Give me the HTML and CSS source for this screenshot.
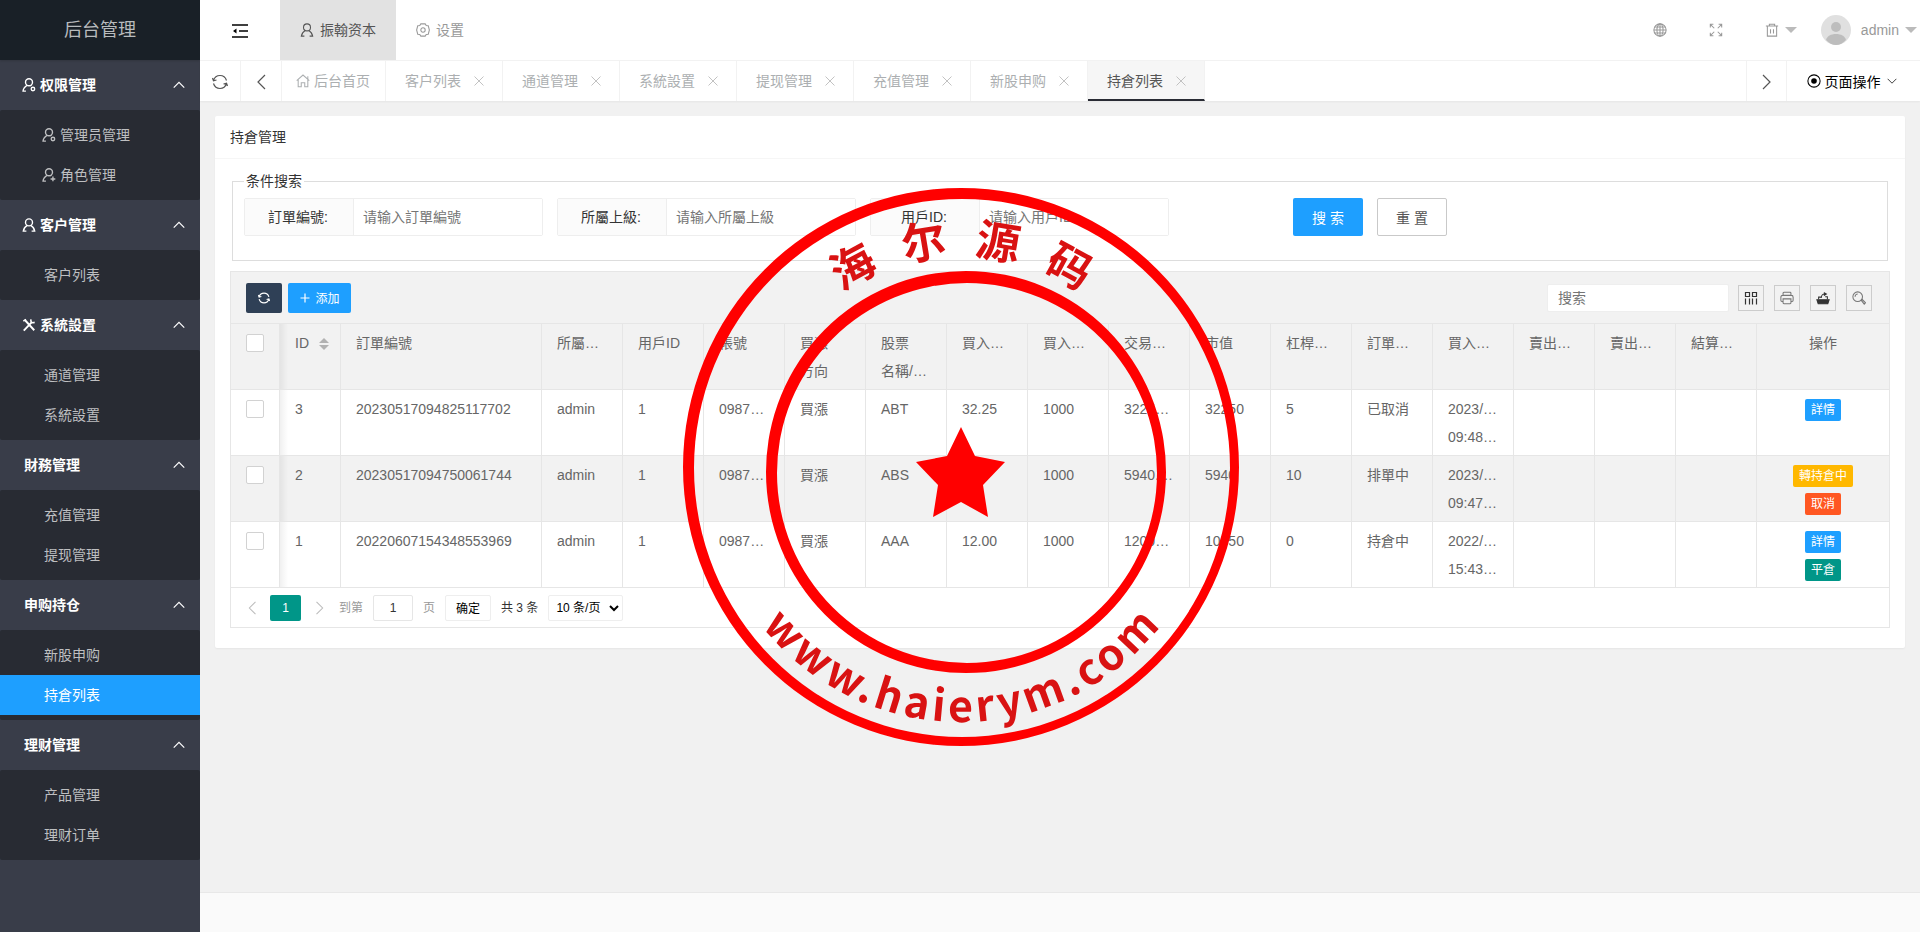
FILE: index.html
```html
<!DOCTYPE html>
<html lang="zh-CN">
<head>
    <meta charset="UTF-8">
    <meta name="viewport" content="width=device-width, initial-scale=1.0">
    <title>后台管理</title>
    <link rel="stylesheet" href="styles.css">
</head>
<body>
    <!-- icon set -->
    <svg class="sprite" aria-hidden="true">
        <symbol id="i-user" viewBox="0 0 16 16"><circle cx="8" cy="5" r="4"/><path d="M6 8.500C3.500 10 2 12 1.500 15H5M10 8.500c2.500 1.500 4 3.500 4.500 6.500H11"/></symbol>
        <symbol id="i-user-set" viewBox="0 0 16 16"><circle cx="8" cy="4.800" r="4"/><path d="M6 8.300C3.500 9.800 1.500 12 1.200 15h3.300M9.800 8.300l.8.700"/><circle cx="12.500" cy="12.500" r="2"/></symbol>
        <symbol id="i-user-add" viewBox="0 0 16 16"><circle cx="8" cy="4.800" r="4"/><path d="M6 8.300C3.500 9.800 1.500 12 1.200 15h3.300M9.800 8.300l.8.700M12.500 9.800v5.400M9.800 12.500h5.400"/></symbol>
        <symbol id="i-tools" viewBox="0 0 16 16"><path d="M2 14.500 11 5M3 2l11 12" stroke-width="2.200"/><path d="M10.500 1.500c-1 2 0 4 2 4l2-.5M1.500 3.500l3-2" stroke-width="1.800"/></symbol>
        <symbol id="i-up" viewBox="0 0 16 16"><path d="M1 11.500 8 4.500l7 7"/></symbol>
        <symbol id="i-down" viewBox="0 0 16 16"><path d="M1 4.500l7 7 7-7"/></symbol>
        <symbol id="i-left" viewBox="0 0 16 16"><path d="M12 1 5 8l7 7"/></symbol>
        <symbol id="i-right" viewBox="0 0 16 16"><path d="M4 1l7 7-7 7"/></symbol>
        <symbol id="i-close" viewBox="0 0 16 16"><path d="M2 2l12 12M14 2 2 14"/></symbol>
        <symbol id="i-plus" viewBox="0 0 16 16"><path d="M8 2v12M2 8h12"/></symbol>
        <symbol id="i-refresh" viewBox="0 0 16 16"><path d="M1.500 6.500C2.500 3.300 5 1.500 8 1.500c3 0 5.500 1.800 6.500 5M14.500 9.500c-1 3.200-3.500 5-6.500 5-3 0-5.500-1.800-6.500-5M.5 4l1 2.800 3-.8M15.500 12l-1-2.800-3 .8"/></symbol>
        <symbol id="i-fold" viewBox="0 0 16 14"><path d="M0 1h16M7 7h9M0 13h16" stroke-width="1.600"/><path d="M4.500 4.500v5L1 7z" fill="currentColor" stroke="none"/></symbol>
        <symbol id="i-gear" viewBox="0 0 16 16"><path d="M5.500 1h5l1.200 1.800 2.300.4L15.300 8 14 12.800l-2.300.4L10.500 15h-5l-1.200-1.800-2.300-.4L.7 8 2 3.200l2.300-.4z"/><circle cx="8" cy="8" r="2.500"/></symbol>
        <symbol id="i-home" viewBox="0 0 16 16"><path d="M.8 7.500 8 1.200l7.200 6.300M2.500 6.500v8h3.500v-4.500h4v4.500h3.500v-12"/></symbol>
        <symbol id="i-globe" viewBox="0 0 16 16"><circle cx="8" cy="8" r="7"/><ellipse cx="8" cy="8" rx="3.500" ry="7"/><path d="M8 1v14M1 8h14M2 4.500h12M2 11.500h12"/></symbol>
        <symbol id="i-full" viewBox="0 0 16 16"><path d="M1.500 5v-3.500H5M1.500 1.500l4.500 4.500M11 1.500h3.500V5M14.500 1.500 10 6M1.500 11v3.500H5M1.500 14.500 6 10M14.500 11v3.500H11M14.500 14.500 10 10"/></symbol>
        <symbol id="i-trash" viewBox="0 0 16 16"><path d="M1 3.500h14M5 3.500v-2h6v2M2.700 3.500v11.500h10.600V3.500M6.300 7v5M9.700 7v5"/></symbol>
        <symbol id="i-caret" viewBox="0 0 12 6"><path d="M0 0h12L6 6z" fill="currentColor" stroke="none"/></symbol>
        <symbol id="i-radio" viewBox="0 0 16 16"><circle cx="8" cy="8" r="7"/><circle cx="8" cy="8" r="3.200" fill="currentColor" stroke="none"/></symbol>
        <symbol id="i-cols" viewBox="0 0 14 14"><path d="M1.500 1.500h4v4h-4zM8.500 1.500h4v4h-4zM1.500 7.500v6M5.500 7.500v6M8.500 7.500v6M12.500 7.500v6"/></symbol>
        <symbol id="i-print" viewBox="0 0 16 16"><path d="M3.500 5V2.500c0-.7.3-1 1-1h7c.7 0 1 .3 1 1V5M3.500 12H2.200C1.300 12 1 11.500 1 10.700V7c0-1.300.7-2 2-2h10c1.300 0 2 .7 2 2v3.700c0 .8-.3 1.300-1.200 1.300h-1.300M3.500 9h9v4.500c0 .7-.3 1-1 1h-7c-.7 0-1-.3-1-1z"/></symbol>
        <symbol id="i-export" viewBox="0 0 16 16"><path d="M1 10h14l-1.500 4.500h-11z" fill="currentColor"/><path d="M3 9.500V7h2.500M10.500 6.500H13v3M6 8c0-3 1.500-4.500 4-4.500"/><path d="M9 1l4 2.500L9 6z" fill="currentColor" stroke="none"/></symbol>
        <symbol id="i-search" viewBox="0 0 16 16"><circle cx="6.500" cy="6.500" r="5.500"/><path d="M3.500 6.500c0-1.700 1.300-3 3-3M10.500 10.500l1-1 4 4-1.500 1.500z"/></symbol>
    </svg>

    <div class="admin">
        <aside class="side">
            <div class="logo">后台管理</div>
            <nav class="menu">
                <h3><svg class="icon"><use href="#i-user-set"/></svg>权限管理<svg class="icon arrow"><use href="#i-up"/></svg></h3>
                <div class="sub">
                    <a href="#"><svg class="icon"><use href="#i-user-set"/></svg>管理员管理</a>
                    <a href="#"><svg class="icon"><use href="#i-user-add"/></svg>角色管理</a>
                </div>
                <h3><svg class="icon"><use href="#i-user"/></svg>客户管理<svg class="icon arrow"><use href="#i-up"/></svg></h3>
                <div class="sub">
                    <a href="#">客户列表</a>
                </div>
                <h3><svg class="icon"><use href="#i-tools"/></svg>系統設置<svg class="icon arrow"><use href="#i-up"/></svg></h3>
                <div class="sub">
                    <a href="#">通道管理</a>
                    <a href="#">系統設置</a>
                </div>
                <h3>財務管理<svg class="icon arrow"><use href="#i-up"/></svg></h3>
                <div class="sub">
                    <a href="#">充值管理</a>
                    <a href="#">提现管理</a>
                </div>
                <h3>申购持仓<svg class="icon arrow"><use href="#i-up"/></svg></h3>
                <div class="sub">
                    <a href="#">新股申购</a>
                    <a href="#" class="active">持倉列表</a>
                </div>
                <h3>理财管理<svg class="icon arrow"><use href="#i-up"/></svg></h3>
                <div class="sub">
                    <a href="#">产品管理</a>
                    <a href="#">理财订单</a>
                </div>
            </nav>
        </aside>

        <div class="main">
            <header class="header">
                <button class="fold" aria-label="侧边伸缩"><svg class="icon"><use href="#i-fold"/></svg></button>
                <a href="#" class="top-link active"><svg class="icon"><use href="#i-user"/></svg>振翰资本</a>
                <a href="#" class="top-link"><svg class="icon"><use href="#i-gear"/></svg>设置</a>
                <div class="header-right">
                    <a href="#" aria-label="语言"><svg class="icon"><use href="#i-globe"/></svg></a>
                    <a href="#" aria-label="全屏"><svg class="icon"><use href="#i-full"/></svg></a>
                    <a href="#" aria-label="清除缓存"><svg class="icon"><use href="#i-trash"/></svg><svg class="caret"><use href="#i-caret"/></svg></a>
                    <a href="#" class="account">
                        <svg class="avatar" viewBox="0 0 30 30">
                            <circle cx="15" cy="15" r="15" fill="#e0e0e0"/>
                            <circle cx="15" cy="12" r="5" fill="#bdbdbd"/>
                            <path d="M5 25c1-4 5-6 10-6s9 2 10 6c-3 3-6 5-10 5s-7-2-10-5z" fill="#bdbdbd"/>
                        </svg>
                        <span>admin</span>
                        <svg class="caret"><use href="#i-caret"/></svg>
                    </a>
                </div>
            </header>

            <div class="tabs">
                <button class="tab-ctl" aria-label="刷新"><svg class="icon"><use href="#i-refresh"/></svg></button>
                <button class="tab-ctl" aria-label="向左"><svg class="icon"><use href="#i-left"/></svg></button>
                <a href="#" class="tab home"><svg class="icon"><use href="#i-home"/></svg>后台首页</a>
                <a href="#" class="tab">客户列表<svg class="icon close"><use href="#i-close"/></svg></a>
                <a href="#" class="tab">通道管理<svg class="icon close"><use href="#i-close"/></svg></a>
                <a href="#" class="tab">系統設置<svg class="icon close"><use href="#i-close"/></svg></a>
                <a href="#" class="tab">提现管理<svg class="icon close"><use href="#i-close"/></svg></a>
                <a href="#" class="tab">充值管理<svg class="icon close"><use href="#i-close"/></svg></a>
                <a href="#" class="tab">新股申购<svg class="icon close"><use href="#i-close"/></svg></a>
                <a href="#" class="tab active">持倉列表<svg class="icon close"><use href="#i-close"/></svg></a>
                <button class="tab-ctl next" aria-label="向右"><svg class="icon"><use href="#i-right"/></svg></button>
                <button class="tab-menu"><svg class="icon"><use href="#i-radio"/></svg>页面操作<svg class="icon down"><use href="#i-down"/></svg></button>
            </div>

            <main class="content">
                <section class="card">
                    <div class="card-header">持倉管理</div>
                    <div class="card-body">
                        <fieldset class="search-box">
                            <legend>条件搜索</legend>
                            <form class="search-form">
                                <div class="field">
                                    <label for="order-no">訂單編號:</label>
                                    <input type="text" id="order-no" placeholder="请输入訂單編號">
                                </div>
                                <div class="field">
                                    <label for="parent">所屬上級:</label>
                                    <input type="text" id="parent" placeholder="请输入所屬上級">
                                </div>
                                <div class="field">
                                    <label for="user-id">用戶ID:</label>
                                    <input type="text" id="user-id" placeholder="请输入用戶ID">
                                </div>
                                <div class="form-buttons">
                                    <button type="button" class="btn btn-blue">搜 索</button>
                                    <button type="reset" class="btn btn-plain">重 置</button>
                                </div>
                            </form>
                        </fieldset>

                        <div class="table-view">
                            <div class="toolbar">
                                <button class="btn-sm dark" aria-label="刷新表格"><svg class="icon"><use href="#i-refresh"/></svg></button>
                                <button class="btn-sm blue"><svg class="icon"><use href="#i-plus"/></svg>添加</button>
                                <input type="text" class="table-search" placeholder="搜索" aria-label="搜索">
                                <button class="tool" aria-label="筛选列"><svg class="icon"><use href="#i-cols"/></svg></button>
                                <button class="tool" aria-label="打印"><svg class="icon light"><use href="#i-print"/></svg></button>
                                <button class="tool" aria-label="导出"><svg class="icon"><use href="#i-export"/></svg></button>
                                <button class="tool" aria-label="查找"><svg class="icon light"><use href="#i-search"/></svg></button>
                            </div>

                            <table>
                                <colgroup>
                                    <col class="c-check"><col class="c-id"><col class="c-order">
                                    <col class="c-std" span="15">
                                    <col>
                                </colgroup>
                                <thead>
                                    <tr>
                                        <th><input type="checkbox" aria-label="全选"></th>
                                        <th>ID<span class="sort"></span></th>
                                        <th>訂單編號</th>
                                        <th>所屬…</th>
                                        <th>用戶ID</th>
                                        <th>帳號</th>
                                        <th>買漲<br>方向</th>
                                        <th>股票<br>名稱/…</th>
                                        <th>買入…</th>
                                        <th>買入…</th>
                                        <th>交易…</th>
                                        <th>市值</th>
                                        <th>杠桿…</th>
                                        <th>訂單…</th>
                                        <th>買入…</th>
                                        <th>賣出…</th>
                                        <th>賣出…</th>
                                        <th>結算…</th>
                                        <th>操作</th>
                                    </tr>
                                </thead>
                                <tbody>
                                    <tr>
                                        <td><input type="checkbox" aria-label="选择 3"></td>
                                        <td>3</td>
                                        <td>20230517094825117702</td>
                                        <td>admin</td>
                                        <td>1</td>
                                        <td>0987…</td>
                                        <td>買漲</td>
                                        <td>ABT</td>
                                        <td>32.25</td>
                                        <td>1000</td>
                                        <td>3225…</td>
                                        <td>32250</td>
                                        <td>5</td>
                                        <td>已取消</td>
                                        <td>2023/…<br>09:48…</td>
                                        <td></td>
                                        <td></td>
                                        <td></td>
                                        <td><button class="btn-xs blue">詳情</button></td>
                                    </tr>
                                    <tr>
                                        <td><input type="checkbox" aria-label="选择 2"></td>
                                        <td>2</td>
                                        <td>20230517094750061744</td>
                                        <td>admin</td>
                                        <td>1</td>
                                        <td>0987…</td>
                                        <td>買漲</td>
                                        <td>ABS</td>
                                        <td>5.94</td>
                                        <td>1000</td>
                                        <td>5940.…</td>
                                        <td>5940</td>
                                        <td>10</td>
                                        <td>排單中</td>
                                        <td>2023/…<br>09:47…</td>
                                        <td></td>
                                        <td></td>
                                        <td></td>
                                        <td><button class="btn-xs yellow">轉持倉中</button><br><button class="btn-xs red">取消</button></td>
                                    </tr>
                                    <tr>
                                        <td><input type="checkbox" aria-label="选择 1"></td>
                                        <td>1</td>
                                        <td>20220607154348553969</td>
                                        <td>admin</td>
                                        <td>1</td>
                                        <td>0987…</td>
                                        <td>買漲</td>
                                        <td>AAA</td>
                                        <td>12.00</td>
                                        <td>1000</td>
                                        <td>1200…</td>
                                        <td>10350</td>
                                        <td>0</td>
                                        <td>持倉中</td>
                                        <td>2022/…<br>15:43…</td>
                                        <td></td>
                                        <td></td>
                                        <td></td>
                                        <td><button class="btn-xs blue">詳情</button><br><button class="btn-xs green">平倉</button></td>
                                    </tr>
                                </tbody>
                            </table>

                            <div class="pager">
                                <button class="page-arrow" aria-label="上一页"><svg class="icon"><use href="#i-left"/></svg></button>
                                <button class="page-now">1</button>
                                <button class="page-arrow" aria-label="下一页"><svg class="icon"><use href="#i-right"/></svg></button>
                                <label class="page-skip">到第<input type="text" value="1">页</label>
                                <button class="page-ok">确定</button>
                                <span>共 3 条</span>
                                <select aria-label="每页条数"><option>10 条/页</option></select>
                            </div>
                        </div>
                    </div>
                </section>
            </main>

            <footer class="footer"></footer>
        </div>
    </div>

    <!-- round seal over the page -->
    <svg class="stamp" viewBox="-281 -281 560 560">
        <g fill="#f00" fill-rule="evenodd">
            <path d="M-278 0a278 279 0 1 0 556 0a278 279 0 1 0-556 0zM-267 1a268 269 0 1 0 536 0a268 269 0 1 0-536 0z"/>
            <path d="M-195 5a200 201 0 1 0 400 0a200 201 0 1 0-400 0zM-184 6a190 190 0 1 0 380 0a190 190 0 1 0-380 0z"/>
            <path d="M0-40 14-11 44-5 22 18 27 50 0 35-28 50-23 18-45-5-14-11z"/>
        </g>
        <path id="arc-top" d="M-212 0A212 212 0 0 1 212 0" fill="none"/>
        <path id="arc-bottom" d="M-255 0A255 255 0 0 0 255 0" fill="none"/>
        <text class="stamp-name" dx="0 26 26 26"><textPath href="#arc-top" startOffset="50%">海尔源码</textPath></text>
        <text class="stamp-site" dx="0 4 4 4 4 4 4 4 4 4 4 4 4 4 4"><textPath href="#arc-bottom" startOffset="50%">www.haierym.com</textPath></text>
    </svg>
</body>
</html>
```

FILE: styles.css
```css
/* Global Styles */
* {
    box-sizing: border-box;
}

body {
    margin: 0;
    font-family: "Liberation Sans", "Noto Sans CJK SC", sans-serif;
    font-size: 14px;
    line-height: 24px;
    color: #333;
    background: #f1f1f1;
}

a {
    color: inherit;
    text-decoration: none;
}

button, input, select {
    font-family: inherit;
    font-size: 14px;
    color: inherit;
}

button {
    margin: 0;
    padding: 0;
    border: none;
    background: none;
    cursor: pointer;
}

input::placeholder {
    color: #757575;
}

.sprite {
    position: absolute;
    width: 0;
    height: 0;
}

.icon {
    flex: none;
    width: 14px;
    height: 14px;
    fill: none;
    stroke: currentColor;
    stroke-width: 1.2;
}

.caret {
    flex: none;
    width: 12px;
    height: 6px;
}

.admin {
    display: flex;
    min-height: 100vh;
}

/* Side Menu */
.side {
    flex: none;
    width: 200px;
    background: #393d49;
}

.logo {
    height: 60px;
    line-height: 60px;
    text-align: center;
    font-size: 18px;
    color: #b8bbbd;
    background: #192027;
    box-shadow: 0 1px 2px rgba(0, 0, 0, 0.15);
}

.menu h3 {
    display: flex;
    align-items: center;
    gap: 4px;
    height: 50px;
    margin: 0;
    padding: 0 15px 0 24px;
    font-size: 14px;
    color: #fff;
}

.menu .icon {
    margin-left: -2px;
    stroke-width: 1.6;
}

.menu .arrow {
    width: 12px;
    height: 12px;
    margin-left: auto;
}

.sub {
    padding: 5px 0;
    border-radius: 2px;
    background: #282b33;
    color: #bebfc1;
}

.sub a {
    display: flex;
    align-items: center;
    gap: 4px;
    height: 40px;
    padding-left: 44px;
}

.sub .active {
    color: #fff;
    background: #1e9fff;
}

/* Header */
.main {
    flex: 1;
    min-width: 0;
    display: flex;
    flex-direction: column;
}

.header {
    display: flex;
    align-items: stretch;
    height: 61px;
    background: #fff;
    border-bottom: 1px solid #f2f2f2;
    color: #999;
}

.fold {
    width: 80px;
    color: #000;
}

.fold .icon {
    width: 16px;
    height: 14px;
    vertical-align: middle;
}

.top-link {
    display: flex;
    align-items: center;
    gap: 6px;
    padding: 0 20px;
}

.top-link.active {
    color: #555;
    background: #e2e2e2;
}

.header-right {
    display: flex;
    align-items: center;
    gap: 42px;
    margin-left: auto;
    padding-right: 3px;
}

.header-right a {
    display: flex;
    align-items: center;
    gap: 6px;
}

.header-right .caret {
    color: #bbb;
}

.header-right .account {
    margin-left: -18px;
}

.avatar {
    width: 30px;
    height: 30px;
    margin-right: 4px;
}

/* Tabs */
.tabs {
    display: flex;
    height: 40px;
    background: #fff;
    box-shadow: 0 1px 2px rgba(0, 0, 0, 0.05);
    color: #acafb1;
}

.tab-ctl {
    flex: none;
    width: 41px;
    border-right: 1px solid #f2f2f2;
    color: #555;
}

.tab-ctl .icon {
    width: 16px;
    height: 16px;
    vertical-align: middle;
}

.tab {
    display: flex;
    align-items: center;
    width: 117px;
    padding-left: 19px;
    border-right: 1px solid #f2f2f2;
    white-space: nowrap;
}

.tab.home {
    width: 104px;
    gap: 4px;
    padding-left: 14px;
}

.tab .close {
    width: 12px;
    height: 12px;
    margin-left: 12px;
    color: #bbb;
}

.tab.active {
    color: #555;
    background: #f6f6f6;
    border-bottom: 2px solid #292b34;
    padding-top: 2px;
}

.next {
    margin-left: auto;
    border-left: 1px solid #f2f2f2;
}

.tab-menu {
    display: flex;
    align-items: center;
    justify-content: center;
    gap: 4px;
    width: 133px;
    padding-right: 4px;
    color: #000;
}

.tab-menu .down {
    width: 10px;
    height: 10px;
    margin-left: 2px;
}

/* Card */
.content {
    flex: 1;
    padding: 15px;
}

.card {
    background: #fff;
    border-radius: 2px;
    box-shadow: 0 1px 2px rgba(0, 0, 0, 0.05);
}

.card-header {
    height: 43px;
    line-height: 42px;
    padding: 0 15px;
    border-bottom: 1px solid #f6f6f6;
}

.card-body {
    padding: 10px 15px 20px;
}

/* Search Form */
.search-box {
    margin: 0 2px 10px;
    padding: 5px 11px 24px;
    border: 1px solid #ddd;
}

.search-box legend {
    padding: 0 2px;
}

.search-form {
    display: flex;
    flex-wrap: wrap;
    gap: 14px;
}

.field {
    display: flex;
    width: 299px;
    height: 38px;
    border: 1px solid #eee;
    border-radius: 2px;
}

.field label {
    flex: none;
    width: 109px;
    padding-right: 2px;
    line-height: 36px;
    text-align: center;
    border-right: 1px solid #eee;
    background: #fbfbfb;
}

.field input {
    flex: 1;
    min-width: 0;
    padding: 0 9px;
    border: none;
}

.form-buttons {
    display: flex;
    gap: 14px;
    margin-left: 110px;
}

.btn {
    width: 70px;
    height: 38px;
    border-radius: 2px;
}

.btn-blue {
    color: #fff;
    background: #1e9fff;
}

.btn-plain {
    color: #555;
    border: 1px solid #c9c9c9;
}

/* Table */
.table-view {
    border: 1px solid #e6e6e6;
}

.toolbar {
    display: flex;
    align-items: center;
    gap: 10px;
    height: 52px;
    padding: 0 17px 0 15px;
    background: #f2f2f2;
    border-bottom: 1px solid #e6e6e6;
}

.btn-sm {
    display: flex;
    align-items: center;
    justify-content: center;
    gap: 4px;
    height: 30px;
    border-radius: 2px;
    font-size: 12px;
    color: #fff;
}

.btn-sm .icon {
    width: 12px;
    height: 12px;
    stroke-width: 1.6;
}

.btn-sm.dark {
    width: 36px;
    background: #2f4056;
    margin-right: -4px;
}

.btn-sm.blue {
    width: 63px;
}

.table-search {
    width: 182px;
    height: 28px;
    margin-left: auto;
    margin-right: -1px;
    padding: 0 10px;
    border: 1px solid #eee;
    border-radius: 2px;
}

.tool {
    display: flex;
    align-items: center;
    justify-content: center;
    width: 26px;
    height: 26px;
    border: 1px solid #ccc;
    color: #333;
}

.tool .light {
    color: #777;
}

table {
    width: 100%;
    table-layout: fixed;
    border-collapse: separate;
    border-spacing: 0;
    color: #666;
}

.c-check {
    width: 49px;
}

.c-id {
    width: 61px;
}

.c-order {
    width: 201px;
}

.c-std {
    width: 81px;
}

th, td {
    height: 66px;
    padding: 5px 15px 4px;
    line-height: 28px;
    text-align: left;
    vertical-align: top;
    font-weight: 400;
    white-space: nowrap;
    border-right: 1px solid #e6e6e6;
    border-bottom: 1px solid #e6e6e6;
}

thead tr, tbody tr:nth-child(even) {
    background: #f2f2f2;
}

th:last-child, td:last-child {
    text-align: center;
    border-right: none;
}

th:nth-child(2), td:nth-child(2) {
    padding-right: 0;
    background: linear-gradient(to right, rgba(0, 0, 0, 0.06), rgba(0, 0, 0, 0) 8px);
}

input[type="checkbox"] {
    appearance: none;
    display: block;
    width: 18px;
    height: 18px;
    margin: 5px 0;
    border: 1px solid #d2d2d2;
    border-radius: 2px;
    background: #fff;
}

.sort {
    display: inline-flex;
    flex-direction: column;
    gap: 2px;
    margin-left: 10px;
    vertical-align: middle;
}

.sort::before, .sort::after {
    content: "";
    border: 5px solid transparent;
}

.sort::before {
    border-top: none;
    border-bottom-color: #b2b2b2;
}

.sort::after {
    border-bottom: none;
    border-top-color: #b2b2b2;
}

.btn-xs {
    height: 22px;
    padding: 0 6px;
    line-height: 22px;
    border-radius: 2px;
    font-size: 12px;
    color: #fff;
    vertical-align: middle;
}

.blue {
    background: #1e9fff;
}

.yellow {
    background: #ffb800;
}

.red {
    background: #ff5722;
}

.green {
    background: #009688;
}

/* Pager */
.pager {
    display: flex;
    align-items: center;
    height: 39px;
    padding: 0 7px;
    font-size: 12px;
}

.pager button, .pager input, .pager select {
    height: 26px;
    font-size: 12px;
    border-radius: 2px;
}

.page-arrow {
    width: 27px;
    color: #bbb;
}

.page-arrow .icon {
    width: 14px;
    height: 14px;
    vertical-align: middle;
}

.pager .page-now {
    width: 31px;
    margin: 0 5px;
    color: #fff;
    background: #009688;
}

.page-skip {
    margin-left: 6px;
    color: #999;
}

.page-skip input {
    width: 40px;
    margin: 0 10px;
    text-align: center;
    color: #333;
    border: 1px solid #e6e6e6;
}

.page-ok {
    width: 46px;
    margin: 0 10px;
}

.pager .page-ok, .pager select {
    color: #000;
    background: #fff;
    border: 1px solid #eee;
}

.pager .page-ok {
    margin: 0 10px;
}

.pager select {
    width: 75px;
    margin-left: 10px;
    padding: 0 3px;
}

/* Footer */
.footer {
    height: 40px;
    border-top: 1px solid #e8e8e8;
    background: #fafafa;
}

/* Seal */
.stamp {
    position: fixed;
    top: 50%;
    left: 50%;
    width: 560px;
    height: 560px;
    transform: translate(-50%, -50%);
    pointer-events: none;
}

.stamp text {
    font-family: "Noto Sans CJK SC", sans-serif;
    font-weight: 700;
    fill: #d91212;
    text-anchor: middle;
}

.stamp-name {
    font-size: 44px;
}

.stamp-site {
    font-size: 43px;
}
```
